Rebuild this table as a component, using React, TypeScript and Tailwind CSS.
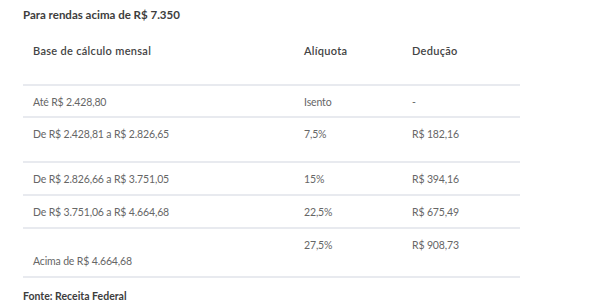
const rows = [
  { base: "Até R$ 2.428,80", aliq: "Isento", ded: "-", h: "h-[32px]" },
  { base: "De R$ 2.428,81 a R$ 2.826,65", aliq: "7,5%", ded: "R$ 182,16", h: "h-[45px]" },
  { base: "De R$ 2.826,66 a R$ 3.751,05", aliq: "15%", ded: "R$ 394,16", h: "h-[33px]" },
  { base: "De R$ 3.751,06 a R$ 4.664,68", aliq: "22,5%", ded: "R$ 675,49", h: "h-[33px]" },
];

export default function App() {
  return (
    <div className="h-[306px] w-[600px] bg-white pl-[23px] font-['Lato','Liberation_Sans',sans-serif] text-[11px] leading-[14px]">
      <p className="pt-[8px] text-[11.5px] font-bold text-[#3d3d3d]">Para rendas acima de R$ 7.350</p>
      <table className="mt-[6px] w-[497px] border-collapse">
        <thead>
          <tr className="h-[57px] border-b-2 border-[#e8eaef] text-left align-top text-[11px] tracking-[0.3px] text-[#444]">
            <th className="w-[271px] pl-[10px] pt-[16px] font-semibold">Base de cálculo mensal</th>
            <th className="w-[108px] pl-[10px] pt-[16px] font-semibold">Alíquota</th>
            <th className="pl-[10px] pt-[16px] font-semibold">Dedução</th>
          </tr>
        </thead>
        <tbody className="text-[10.5px] tracking-[-0.15px] text-[#666]">
          {rows.map((r) => (
            <tr key={r.base} className={`${r.h} border-b-2 border-[#e8eaef] align-top`}>
              <td className="pl-[10px] pt-[9px]">{r.base}</td>
              <td className="pl-[10px] pt-[9px]">{r.aliq}</td>
              <td className="pl-[10px] pt-[9px]">{r.ded}</td>
            </tr>
          ))}
          <tr className="h-[49px] border-b-2 border-[#e8eaef]">
            <td className="pb-[8px] pl-[10px] align-bottom">Acima de R$ 4.664,68</td>
            <td className="pl-[10px] pt-[9px] align-top">27,5%</td>
            <td className="pl-[10px] pt-[9px] align-top">R$ 908,73</td>
          </tr>
        </tbody>
      </table>
      <p className="pt-[11px] text-[10.5px] font-bold text-[#3d3d3d]">Fonte: Receita Federal</p>
    </div>
  );
}
